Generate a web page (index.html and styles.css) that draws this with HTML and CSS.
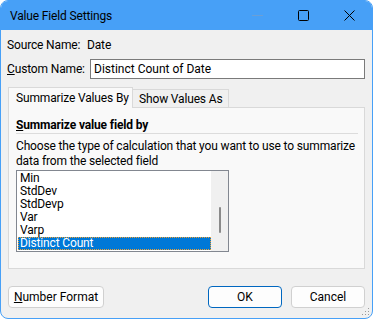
FILE: index.html
```html
<!DOCTYPE html>
<html lang="en">
<head>
    <meta charset="UTF-8">
    <title>Value Field Settings</title>
    <link rel="stylesheet" href="styles.css">
</head>
<body>
<div class="window">
    <!-- Title bar -->
    <div class="titlebar">
        <span class="title">Value Field Settings</span>
        <div class="controls">
            <span class="ctl ctl-min"><svg width="11" height="11" viewBox="0 0 11 11"><path d="M0 5.5h11" stroke="#6a9fd6" stroke-width="1"/></svg></span>
            <span class="ctl"><svg width="11" height="11" viewBox="0 0 11 11"><rect x="0.5" y="0.5" width="10" height="10" rx="1" fill="none" stroke="#000" stroke-width="1"/></svg></span>
            <span class="ctl"><svg width="11" height="11" viewBox="0 0 11 11"><path d="M0.5 0.5L10.5 10.5M10.5 0.5L0.5 10.5" stroke="#000" stroke-width="1"/></svg></span>
        </div>
    </div>

    <div class="body">
        <div class="row">
            <span class="label">Source Name:</span>
            <span class="source">Date</span>
        </div>
        <div class="row">
            <span class="label"><u>C</u>ustom Name:</span>
            <input class="name-input" type="text" value="Distinct Count of Date">
        </div>

        <!-- Tabs -->
        <div class="tabs">
            <div class="tab active">Summarize Values By</div>
            <div class="tab">Show Values As</div>
        </div>
        <div class="panel">
            <div class="group-title"><u>S</u>ummarize value field by</div>
            <p class="desc">Choose the type of calculation that you want to use to summarize data from the selected field</p>
            <div class="listbox">
                <ul class="items">
                    <li>Min</li>
                    <li>StdDev</li>
                    <li>StdDevp</li>
                    <li>Var</li>
                    <li>Varp</li>
                    <li class="selected">Distinct Count</li>
                </ul>
                <div class="scrollbar"><div class="thumb"></div></div>
            </div>
        </div>

        <div class="buttons">
            <button class="btn btn-format"><u>N</u>umber Format</button>
            <div class="spacer"></div>
            <button class="btn btn-ok">OK</button>
            <button class="btn">Cancel</button>
        </div>
    </div>
    <svg class="grip" width="8" height="8" viewBox="0 0 8 8">
        <rect x="6" y="0" width="1" height="1" fill="#9a9a9a"/>
        <rect x="3" y="3" width="1" height="1" fill="#9a9a9a"/>
        <rect x="6" y="3" width="1" height="1" fill="#9a9a9a"/>
        <rect x="0" y="6" width="1" height="1" fill="#9a9a9a"/>
        <rect x="3" y="6" width="1" height="1" fill="#9a9a9a"/>
        <rect x="6" y="6" width="1" height="1" fill="#9a9a9a"/>
    </svg>
</div>
</body>
</html>
```

FILE: styles.css
```css
* {
    margin: 0;
    padding: 0;
    box-sizing: border-box;
}
body {
    font-family: Roboto, 'Liberation Sans', sans-serif;
    font-size: 12px;
    letter-spacing: -0.15px;
    color: #000;
    background: #fff;
}

/* Window frame */
.window {
    position: relative;
    width: 373px;
    height: 319px;
    border: 1px solid #47a0f7;
    border-radius: 8px;
    background: #f0f0f0;
    overflow: hidden;
    display: flex;
    flex-direction: column;
}
.titlebar {
    height: 29px;
    background: #47a0f7;
    display: flex;
    align-items: center;
    padding-left: 9px;
    flex-shrink: 0;
}
.title {
    font-size: 12px;
    color: #000;
    flex: 1;
}
.controls {
    display: flex;
    height: 100%;
}
.ctl {
    width: 46px;
    display: flex;
    align-items: center;
    justify-content: center;
}
.ctl svg {
    display: block;
}

/* Body */
.body {
    flex: 1;
    padding: 5px 7px 0 6px;
    display: flex;
    flex-direction: column;
}
.row {
    height: 20px;
    display: flex;
    align-items: center;
    margin-bottom: 4px;
}
.label {
    width: 80px;
}
.name-input {
    margin-left: 3px;
    flex: 1;
    height: 20px;
    border: 1px solid #7a7a7a;
    background: #fff;
    font: inherit;
    padding: 0 3px;
    outline: none;
    color: #000;
}

/* Tabs */
.tabs {
    display: flex;
    align-items: flex-end;
    margin-top: 4px;
    margin-left: 1px;
    height: 20px;
    position: relative;
    z-index: 1;
}
.tab {
    height: 18px;
    padding: 0 6px;
    border: 1px solid #d9d9d9;
    border-bottom: none;
    background: #f0f0f0;
    display: flex;
    align-items: center;
    white-space: nowrap;
}
.tab.active {
    height: 21px;
    margin-bottom: -1px;
    background: #f9f9f9;
    width: 125px;
    padding-left: 7px;
}
.tab + .tab {
    border-left: none;
    width: 96px;
}
.panel {
    height: 162px;
    margin-left: 1px;
    border: 1px solid #d9d9d9;
    background: #f9f9f9;
    padding: 9px 6px 0 7px;
}
.group-title {
    font-weight: bold;
    height: 16px;
    line-height: 16px;
    border-bottom: 1px solid #dcdcdc;
    box-sizing: content-box;
}
.desc {
    margin-top: 5px;
    line-height: 15px;
}
.listbox {
    margin-top: 1px;
    width: 213px;
    height: 82px;
    border: 1px solid #828790;
    background: #fff;
    display: flex;
    padding: 1px;
}
.items {
    list-style: none;
    flex: 1;
}
.items li {
    height: 13px;
    line-height: 13px;
    padding-left: 2px;
}
.items li.selected {
    background: #0078d7;
    color: #fff;
    outline: 1px dotted #f0a030;
    outline-offset: -1px;
}
.scrollbar {
    width: 17px;
    margin: -1px -1px -1px 0;
    background: #f0f0f0;
    display: flex;
    justify-content: center;
    padding-top: 36px;
}
.thumb {
    width: 2px;
    height: 26px;
    background: #8a8a8a;
    border-radius: 1px;
}

/* Buttons */
.buttons {
    display: flex;
    margin-top: 17px;
    margin-left: 1px;
    gap: 9px;
}
.spacer {
    flex: 1;
}
.btn {
    height: 22px;
    font: inherit;
    color: #000;
    background: #fdfdfd;
    border: 1px solid #d0d0d0;
    border-radius: 4px;
    width: 74px;
}
.btn-format {
    width: 96px;
}
.btn-ok {
    border-color: #0067c0;
}
.grip {
    position: absolute;
    right: 2px;
    bottom: 2px;
}
```
